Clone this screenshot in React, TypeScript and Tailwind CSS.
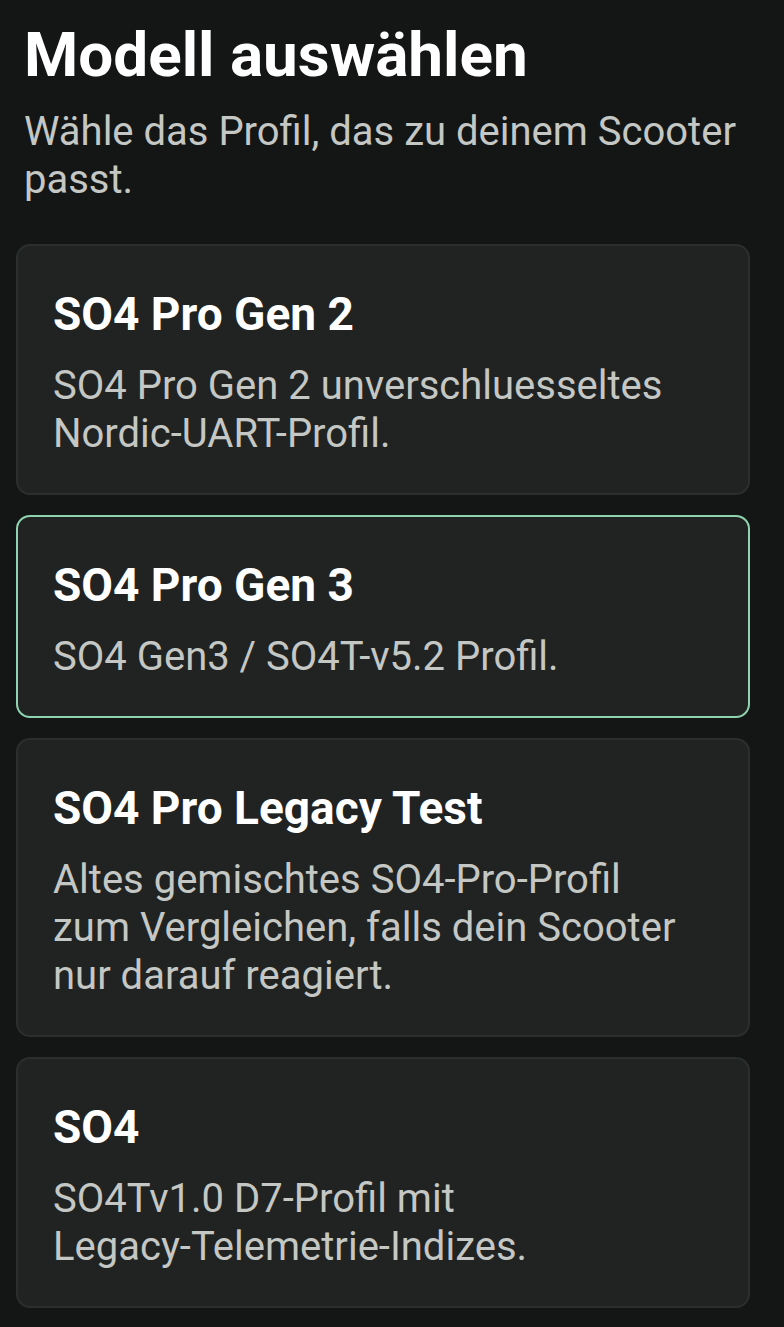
import type { ReactNode } from 'react';

type Model = {
  title: string;
  description: ReactNode;
  selected?: boolean;
};

const models: Model[] = [
  {
    title: 'SO4 Pro Gen 2',
    description: 'SO4 Pro Gen 2 unverschluesseltes Nordic-UART-Profil.',
  },
  {
    title: 'SO4 Pro Gen 3',
    description: 'SO4 Gen3 / SO4T-v5.2 Profil.',
    selected: true,
  },
  {
    title: 'SO4 Pro Legacy Test',
    description: 'Altes gemischtes SO4-Pro-Profil zum Vergleichen, falls dein Scooter nur darauf reagiert.',
  },
  {
    title: 'SO4',
    description: (
      <>
        SO4Tv1.0 D7-Profil mit <span className="whitespace-nowrap">Legacy-Telemetrie-Indizes.</span>
      </>
    ),
  },
];

const App = () => {
  return (
    <div className="w-screen min-h-screen bg-[#131614] font-['Roboto',sans-serif] pt-[19px]">
      <div className="px-6">
        <h1 className="text-[62px] leading-[72px] font-bold text-white">Modell auswählen</h1>
        <p className="mt-[17px] text-[40px] leading-[48px] text-[#c4c7c4]">
          Wähle das Profil, das zu deinem Scooter passt.
        </p>
      </div>

      <div className="mt-10 ml-4 mr-[34px] flex flex-col gap-5">
        {models.map((m) => (
          <button
            key={m.title}
            type="button"
            className={`text-left rounded-[14px] border-2 bg-[#202321] pl-[35px] pr-[48px] pt-10 pb-[35px] ${
              m.selected ? 'border-[#8fd3b0]' : 'border-[#2b2f2c]'
            }`}
          >
            <div className="text-[46px] leading-[56px] font-bold text-white">{m.title}</div>
            <div className="mt-5 text-[40px] leading-[48px] text-[#c4c7c4]">{m.description}</div>
          </button>
        ))}
      </div>
    </div>
  );
};

export default App;
